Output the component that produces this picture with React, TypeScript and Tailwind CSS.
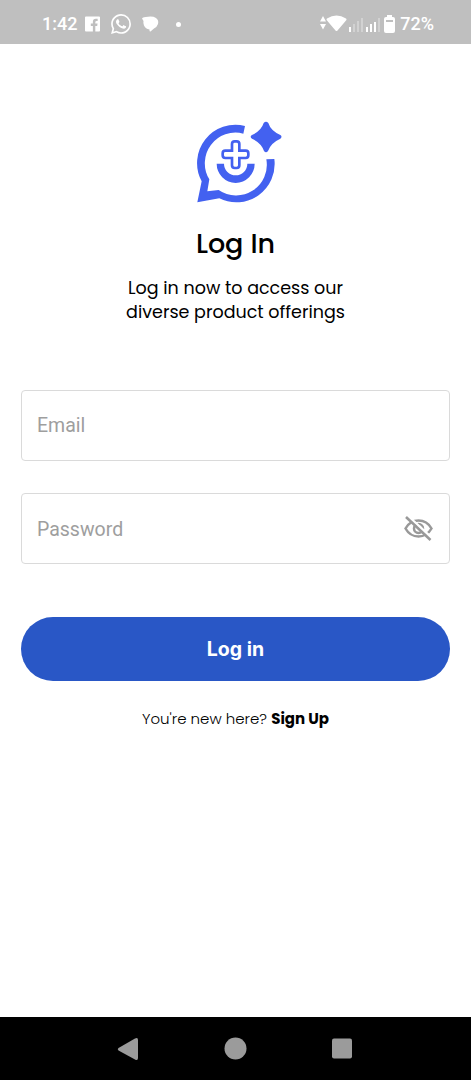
import React from "react";

const displayFont = "font-[Poppins,Inter,sans-serif]";

function Logo() {
  return (
    <svg viewBox="0 0 330 315" className="h-[105px] w-[110px] shrink-0" fill="#4361f0">
      <path d="M180 48A115 115 0 0 0 50 214L37 277L103 265A115 115 0 0 0 268 147L244 148A92 92 0 0 1 101 240L67 244L73 208A92 92 0 0 1 175 71Z" />
      <path d="M95 161A57 58 0 0 0 209 161H187A35 35 0 0 1 117 161Z" />
      <path
        d="M149 94H155Q163 94 163 102V122H182Q190 122 190 130V136Q190 144 182 144H163V166Q163 174 155 174H149Q141 174 141 166V144H121Q113 144 113 136V130Q113 122 121 122H141V102Q141 94 149 94Z"
        fill="#fff"
        stroke="#4361f0"
        strokeWidth="8"
      />
      <path d="M236 39Q243 31 250 39Q257 62 286 75Q293 80 286 86Q257 99 249 123Q243 131 237 123Q229 99 201 86Q193 80 201 75Q229 62 236 39Z" />
    </svg>
  );
}

function StatusBar() {
  return (
    <header className="flex h-11 shrink-0 items-center justify-between bg-[#bfbfbf] pt-1 pr-[37px] pl-[42px] font-[Roboto,sans-serif] text-[18px] font-medium text-white">
      <div className="flex items-center">
        <span className="w-[43px] pb-[2px] whitespace-nowrap">1:42</span>
        <svg viewBox="0 0 16 16" className="h-4 w-[15px]" fill="#fff">
          <path d="M1 0H15Q16 0 16 1V15Q16 16 15 16H11V10H13L13.4 7.5H11V6Q11 4.7 12.4 4.7H13.5V2.3H11.5Q8.4 2.3 8.4 5.5V7.5H6.2V10H8.4V16H1Q0 16 0 15V1Q0 0 1 0Z" />
        </svg>
        <svg viewBox="0 0 24 24" className="ml-[11px] h-5 w-5" fill="#fff">
          <path d="M17.472 14.382c-.297-.149-1.758-.867-2.03-.967-.273-.099-.471-.148-.67.15-.197.297-.767.966-.94 1.164-.173.199-.347.223-.644.075-.297-.15-1.255-.463-2.39-1.475-.883-.788-1.48-1.761-1.653-2.059-.173-.297-.018-.458.13-.606.134-.133.298-.347.446-.52.149-.174.198-.298.298-.497.099-.198.05-.371-.025-.52-.075-.149-.669-1.612-.916-2.207-.242-.579-.487-.5-.669-.51-.173-.008-.371-.01-.57-.01-.198 0-.52.074-.792.372-.272.297-1.04 1.016-1.04 2.479 0 1.462 1.065 2.875 1.213 3.074.149.198 2.096 3.2 5.077 4.487.709.306 1.262.489 1.694.625.712.227 1.36.195 1.871.118.571-.085 1.758-.719 2.006-1.413.248-.694.248-1.289.173-1.413-.074-.124-.272-.198-.57-.347M12.05 21.785h-.004a9.87 9.87 0 0 1-5.031-1.378l-.361-.214-3.741.982.998-3.648-.235-.374a9.86 9.86 0 0 1-1.51-5.26c.001-5.45 4.436-9.884 9.888-9.884a9.83 9.83 0 0 1 6.988 2.898 9.825 9.825 0 0 1 2.893 6.994c-.003 5.45-4.437 9.884-9.885 9.884m8.413-18.297A11.815 11.815 0 0 0 12.05 0C5.495 0 .16 5.335.157 11.892c0 2.096.547 4.142 1.588 5.945L.057 24l6.305-1.654a11.882 11.882 0 0 0 5.683 1.448h.005c6.554 0 11.89-5.335 11.893-11.893a11.821 11.821 0 0 0-3.48-8.413" />
        </svg>
        <svg viewBox="0 0 17 16" className="ml-[11px] h-4 w-[17px]" fill="#fff">
          <path d="M0 2.500Q1 .8 6 .7Q11 0 14 2Q17 4 16 8Q15 11 12 12.500L8.500 15.500Q7.500 15.800 7.500 14.500V13.500Q3.500 13 2 9.500Q1 7 1.500 5Z" />
        </svg>
        <span className="ml-[17px] size-[5px] rounded-full bg-white" />
      </div>
      <div className="flex items-center">
        <svg viewBox="0 0 78 22" className="h-[22px] w-[78px]" fill="#fff">
          <path d="M3 3L6 8.500H0ZM0 11H6L3 16.500Z" />
          <path d="M7 5.500Q16.500 -.5 26 5.500Q27 6.500 26 7.500L17.500 17.500Q16.500 18.500 15.500 17.500L7 7.500Q6 6.500 7 5.500Z" />
          <path d="M29 14h2v5h-2zM46 14h2v5h-2zM50 11h2v8h-2zM54 9h2v10h-2z" />
          <path d="M33 11h2v8h-2zM37 8h2v11h-2zM41 5h2v14h-2zM58 5h2v14h-2z" opacity=".3" />
          <path
            fillRule="evenodd"
            d="M67 2H72V4H73Q75 4 75 6V18Q75 20 73 20H66Q64 20 64 18V6Q64 4 66 4H67ZM66 7V9H73V7Z"
          />
        </svg>
        <span className="ml-[2px] pb-[2px] whitespace-nowrap">72%</span>
      </div>
    </header>
  );
}

function HiddenEye() {
  return (
    <svg viewBox="0 0 30 26" className="h-[26px] w-[30px]" fill="none" stroke="#999" strokeWidth="2.500">
      <path d="M2.500 12.500Q7 4.500 15.500 4.500Q24 4.500 28.500 12.500Q24 20.500 15.500 20.500Q7 20.500 2.500 12.500Z" />
      <circle cx="15.500" cy="12.500" r="4.500" />
      <path d="M5 0L30 23" stroke="#fff" />
      <path d="M3 1L27.500 24" />
    </svg>
  );
}

const fieldInput =
  "min-w-0 flex-1 bg-transparent font-[Roboto,sans-serif] text-[19.500px] outline-none placeholder:text-[#9e9e9e]";
const fieldBox =
  "flex h-[71px] items-center rounded-[4px] border border-[#dadada] pr-4 pl-[15px]";

export default function App() {
  return (
    <div className="flex h-[1080px] w-[471px] flex-col overflow-hidden bg-white text-black">
      <StatusBar />
      <main className="flex flex-1 flex-col px-[21px] pt-[66px]">
        <div className="flex flex-col items-center">
          <div className="pl-[9px]">
            <Logo />
          </div>
          <h1 className={`mt-[11px] text-[27px] leading-9 font-medium ${displayFont}`}>Log In</h1>
          <p className={`mt-[14px] text-center text-[17.500px] leading-6 ${displayFont}`}>
            Log in now to access our
            <br />
            diverse product offerings
          </p>
        </div>
        <form className="mt-[66px] flex flex-col">
          <div className={fieldBox}>
            <input type="email" placeholder="Email" className={`pt-px ${fieldInput}`} />
          </div>
          <div className={`mt-8 ${fieldBox}`}>
            <input type="password" placeholder="Password" className={`pt-[2px] ${fieldInput}`} />
            <button type="button">
              <HiddenEye />
            </button>
          </div>
          <button
            type="button"
            className="mt-[53px] h-16 rounded-full bg-[#2957c6] pt-px font-[Inter,sans-serif] text-[19.500px] font-bold text-white"
          >
            Log in
          </button>
        </form>
        <p className={`mt-[26px] text-center text-[15px] leading-6 font-light ${displayFont}`}>
          You're new here? <span className="font-bold">Sign Up</span>
        </p>
      </main>
      <nav className="flex h-[63px] shrink-0 items-center justify-center bg-black">
        <svg viewBox="0 0 240 24" className="h-6 w-[240px]" fill="#9b9b9b">
          <path d="M2.500 11L19 1.500Q22 0 22 3V21Q22 24 19 22.500L2.500 13.500Q1 12 2.500 11Z" />
          <circle cx="119.500" cy="11.500" r="11" />
          <rect x="216" y="1.500" width="20" height="20" rx="2" />
        </svg>
      </nav>
    </div>
  );
}
